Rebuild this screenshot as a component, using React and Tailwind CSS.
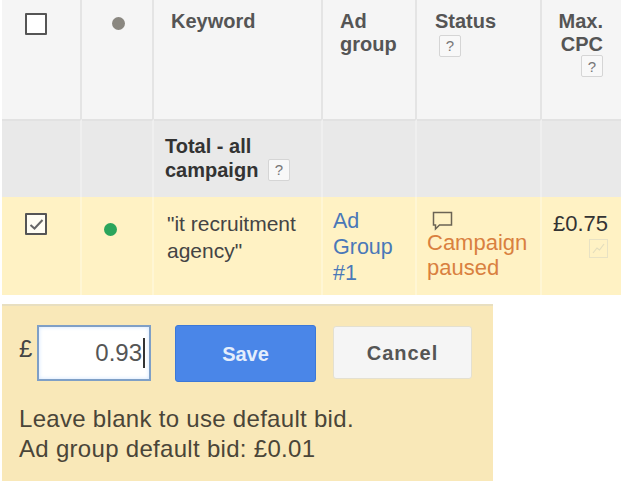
const Help = ({ className = "" }) => (
  <span
    className={`inline-flex h-[22px] w-[22px] items-center justify-center rounded-[2px] border border-[#d5d5d5] bg-[#f8f8f8] text-[15px] font-normal leading-none text-[#777] ${className}`}
  >
    ?
  </span>
);

const headCell = "border-r-2 border-[#e4e4e4] bg-[#f5f5f5]";
const headText = "text-[20px] font-bold leading-[23px] text-[#555]";
const totalCell = "border-t-2 border-t-[#e2e2e2] border-r-2 border-r-[#efefef] bg-[#e9e9e9]";
const rowCell = "border-r-2 border-[#fff6d4] bg-[#fff2c4]";

const App = () => {
  return (
    <div className="h-[481px] w-[623px] overflow-hidden bg-white font-['Liberation_Sans',Arial,sans-serif]">
      {/* Keyword table */}
      <div className="ml-[2px] grid w-[619px] grid-cols-[80px_72px_169px_94px_125px_79px] grid-rows-[119px_78px_98px]">
        {/* Header */}
        <div className={`${headCell} pl-[23px] pt-[13px]`}>
          <div className="h-[22px] w-[22px] rounded-[1px] border-2 border-[#555] bg-white" />
        </div>
        <div className={`${headCell} pl-[30px] pt-[17px]`}>
          <div className="h-[13px] w-[13px] rounded-full bg-[#8a8780]" />
        </div>
        <div className={`${headCell} ${headText} pl-[17px] pt-[10px]`}>Keyword</div>
        <div className={`${headCell} ${headText} pl-[17px] pt-[10px]`}>
          Ad
          <br />
          group
        </div>
        <div className={`${headCell} ${headText} pl-[18px] pt-[10px]`}>
          <div>Status</div>
          <Help className="-mt-[2px] ml-[4px] block" />
        </div>
        <div className={`${headText} bg-[#f5f5f5] pr-[18px] pt-[10px] text-right`}>
          <div>Max.</div>
          <div>CPC</div>
          <div className="-mt-[1px] flex justify-end">
            <Help />
          </div>
        </div>

        {/* Total row */}
        <div className={totalCell} />
        <div className={totalCell} />
        <div className={`${totalCell} pl-[11px] pt-[13px] text-[20px] font-bold leading-[24px] text-[#333]`}>
          Total - all
          <br />
          campaign <Help className="ml-[4px] align-[2px]" />
        </div>
        <div className={totalCell} />
        <div className={totalCell} />
        <div className="border-t-2 border-t-[#e2e2e2] bg-[#e9e9e9]" />

        {/* Keyword row */}
        <div className={`${rowCell} pl-[23px] pt-[16px]`}>
          <div className="flex h-[22px] w-[22px] items-center justify-center rounded-[1px] border-2 border-[#555] bg-[#fffdf3]">
            <svg width="15" height="13" viewBox="0 0 15 13" fill="none">
              <path d="M1.5 7 L5.5 10.5 L13.5 2" stroke="#666" strokeWidth="2" />
            </svg>
          </div>
        </div>
        <div className={`${rowCell} pl-[22px] pt-[26px]`}>
          <div className="h-[13px] w-[13px] rounded-full bg-[#2aa55c]" />
        </div>
        <div className={`${rowCell} pl-[13px] pt-[13px] text-[21px] leading-[27px] text-[#444]`}>
          "it recruitment agency"
        </div>
        <div className={`${rowCell} pl-[10px] pt-[11px] text-[21.5px] leading-[26px] text-[#4a78b8]`}>
          Ad
          <br />
          Group
          <br />
          #1
        </div>
        <div className={`${rowCell} pl-[10px] pt-[14px] text-[22px] leading-[25px] text-[#d9803f]`}>
          <svg className="ml-[5px] block" width="21" height="20" viewBox="0 0 21 20" fill="none">
            <path d="M1.5 1.5 H19.5 V14 H7.5 L3.5 18 V14 H1.5 Z" stroke="#6b6454" strokeWidth="1.5" />
          </svg>
          <div className="-mt-[1px]">
            Campaign
            <br />
            paused
          </div>
        </div>
        <div className="bg-[#fff2c4] pr-[13px] pt-[13px] text-right text-[22px] leading-[28px] text-[#333]">
          <div>£0.75</div>
          <div className="mt-[1px] flex justify-end">
            <span className="flex h-[19px] w-[19px] items-center justify-center border border-[#e8e2c4]">
              <svg width="13" height="11" viewBox="0 0 13 11" fill="none">
                <path d="M1 10 L5 5 L7.5 7 L12 1" stroke="#e3ddbd" strokeWidth="1.2" />
              </svg>
            </span>
          </div>
        </div>
      </div>

      {/* Bid editor */}
      <div className="ml-[2px] mt-[9px] h-[177px] w-[491px] border-t-2 border-[#e8dfc0] bg-[#f9e8b8] pl-[17px] pt-[19px]">
        <div className="flex items-start">
          <span className="mt-[10px] w-[18px] text-[24px] leading-[28px] text-[#444]">£</span>
          <div className="flex h-[56px] w-[114px] items-center justify-end border-2 border-[#7f9fc6] bg-white pr-[4px] text-[24px] text-[#555] shadow-[inset_0_0_4px_#cfe4ff]">
            0.93
            <span className="ml-[1px] h-[30px] w-[2px] bg-[#333]" />
          </div>
          <div className="ml-[24px] flex h-[57px] w-[141px] items-center justify-center rounded-[3px] border border-[#3b78d8] bg-[#4a86e8] text-[20px] font-bold text-[#e4eefc]">
            Save
          </div>
          <div className="ml-[17px] mt-[1px] flex h-[53px] w-[139px] items-center justify-center rounded-[3px] border border-[#e4e0d0] bg-[#f5f5f5] text-[20px] font-bold tracking-[1px] text-[#555]">
            Cancel
          </div>
        </div>
        <div className="mt-[22px] text-[24px] leading-[30px] tracking-[0.3px] text-[#4a4538]">
          Leave blank to use default bid.
          <br />
          Ad group default bid: £0.01
        </div>
      </div>
    </div>
  );
};

export default App;
